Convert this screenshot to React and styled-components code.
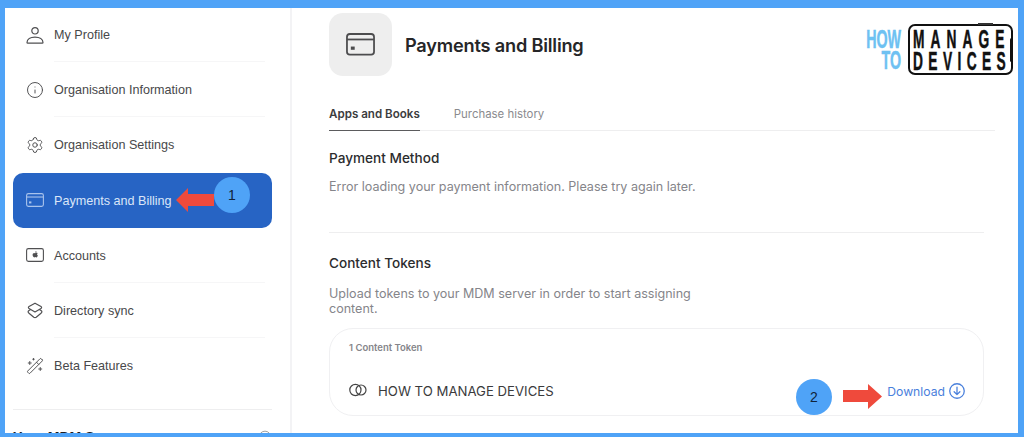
import styled, { createGlobalStyle } from "styled-components";
import { Info, Settings, WandSparkles } from "lucide-react";

const Global = createGlobalStyle`
  html, body {
    margin: 0;
    background: #fff;
  }
  * {
    box-sizing: border-box;
  }
`;

const Frame = styled.div`
  position: relative;
  width: 1024px;
  height: 437px;
  padding: 8px 6px 4px 5px;
  background: #4fa3f7;
  font-family: "Inter", "Liberation Sans", sans-serif;
  overflow: hidden;
`;

const Inner = styled.div`
  display: flex;
  height: 100%;
  background: #fff;
  overflow: hidden;
`;

const Sidebar = styled.aside`
  flex: 0 0 287px;
  padding: 0 18px 0 8px;
  margin-top: -1px;
  border-right: 2px solid #f3f3f5;
  font-family: "Liberation Sans", sans-serif;
`;

const NavRow = styled.div`
  display: flex;
  align-items: stretch;
  height: 55.2px;
  padding-left: 13px;
  border-radius: 10px;
  background: ${(p) => (p.$active ? "#2764c4" : "transparent")};
  color: ${(p) => (p.$active ? "#dbe6f8" : "#48484a")};
  font-size: 12.6px;
`;

const NavIcon = styled.span`
  flex: 0 0 28px;
  display: flex;
  align-items: center;
  color: ${(p) => (p.$active ? "#a9c3ec" : "#505052")};
`;

const NavLabel = styled.span`
  flex: 1;
  display: flex;
  align-items: center;
  margin-right: 7px;
  padding-top: 2px;
  border-bottom: 1px solid ${(p) => (p.$divider ? "#f6f6f7" : "transparent")};
`;

const SideRule = styled.div`
  height: 1px;
  margin-top: 16px;
  background: #eeeeef;
`;

const SideHeader = styled.div`
  display: flex;
  justify-content: space-between;
  align-items: center;
  padding-top: 19px;
  font-size: 14px;
  font-weight: 700;
  color: #1d1d1f;
`;

const Main = styled.main`
  flex: 1;
  padding: 5px 34px 0 37px;
  color: #1d1d1f;
`;

const Header = styled.header`
  display: flex;
  align-items: center;
  gap: 13px;
`;

const Tile = styled.div`
  width: 63px;
  height: 63px;
  display: flex;
  align-items: center;
  justify-content: center;
  border-radius: 14px;
  background: #eeeeee;
  color: #4c4c4e;
`;

const Title = styled.h1`
  margin: 0;
  font-size: 18.2px;
  font-weight: 600;
  letter-spacing: -0.2px;
  color: #262628;
`;

const Tabs = styled.nav`
  display: flex;
  gap: 34px;
  margin: 28px -11px 0 0;
  border-bottom: 1px solid #eeeeef;
`;

const Tab = styled.span`
  height: 27px;
  margin-bottom: -1px;
  padding-top: 3px;
  font-size: ${(p) => (p.$active ? "11.6px" : "11.4px")};
  font-weight: ${(p) => (p.$active ? 600 : 400)};
  color: ${(p) => (p.$active ? "#3c3c3e" : "#8a8a8e")};
  border-bottom: 1px solid ${(p) => (p.$active ? "#5b5b5d" : "transparent")};
`;

const SectionTitle = styled.h2`
  margin: 0;
  font-size: 13.6px;
  font-weight: 500;
  line-height: 16px;
  color: #2c2c2e;
`;

const Muted = styled.p`
  margin: 0;
  font-size: 12.55px;
  line-height: 15px;
  color: #85858a;
`;

const PaymentBlock = styled.section`
  display: flex;
  flex-direction: column;
  gap: 13px;
  height: 102px;
  padding-top: 19px;
  border-bottom: 1px solid #eeeeef;
`;

const TokensBlock = styled.section`
  padding-top: 22px;

  ${Muted} {
    width: 385px;
    margin-top: 15px;
  }
`;

const TokenCard = styled.div`
  height: 88px;
  margin-top: 12px;
  padding: 13px 18px 0 19px;
  border: 1px solid #f0f0f2;
  border-radius: 24px;
`;

const CardCount = styled.div`
  font-size: 9.5px;
  font-weight: 600;
  line-height: 12px;
  color: #85858a;
`;

const TokenRow = styled.div`
  display: flex;
  align-items: center;
  justify-content: space-between;
  margin-top: 29px;
`;

const TokenName = styled.div`
  display: flex;
  align-items: center;
  gap: 11px;
  font-size: 13.2px;
  color: #3a3a3c;

  svg {
    margin-top: -3px;
  }
`;

const DownloadLink = styled.a`
  display: flex;
  align-items: center;
  gap: 4px;
  font-size: 12.2px;
  color: #4a80dc;
`;

const Badge = styled.div`
  position: absolute;
  left: ${(p) => p.$x}px;
  top: ${(p) => p.$y}px;
  width: 36px;
  height: 36px;
  display: flex;
  align-items: center;
  justify-content: center;
  border-radius: 50%;
  background: #4fa3f7;
  font-family: "Liberation Sans", sans-serif;
  font-size: 14px;
  color: #10233a;
`;

const Arrow = styled.svg`
  position: absolute;
  left: ${(p) => p.$x}px;
  top: ${(p) => p.$y}px;
`;

const Logo = styled.div`
  position: absolute;
  left: 840px;
  top: 24px;
  display: flex;
  gap: 7px;
  font-family: "Liberation Sans", sans-serif;
  font-weight: 700;
`;

const LogoHow = styled.div`
  width: 61px;
  padding-top: 4.5px;
  text-align: right;
  font-size: 25px;
  line-height: 21px;
  color: #6ec1f2;
  -webkit-text-stroke: 0.5px #6ec1f2;
  transform: scaleX(0.57);
  transform-origin: right center;
`;

const LogoPhone = styled.div`
  position: relative;
  width: 105px;
  height: 51px;
  padding: 2px 0 0 3px;
  border: 2px solid #111;
  border-radius: 7px;
  font-size: 25px;
  line-height: 22px;
  color: #111;

  &::before {
    content: "";
    position: absolute;
    right: 18px;
    top: -3px;
    width: 15px;
    height: 2px;
    background: #333;
  }

  &::after {
    content: "";
    position: absolute;
    right: -2px;
    top: 12px;
    width: 3px;
    height: 24px;
    border-radius: 2px;
    background: #111;
  }
`;

const LogoLine = styled.div`
  letter-spacing: ${(p) => p.$spacing}px;
  white-space: nowrap;
  width: 180px;
  -webkit-text-stroke: 0.5px #111;
  transform: scaleX(0.55);
  transform-origin: left center;
`;

const CardIcon = ({ size = 18 }) => (
  <svg width={size} height={size * 0.78} viewBox="0 0 18 14" fill="none" stroke="currentColor" strokeWidth="1.1">
    <rect x="0.6" y="0.6" width="16.8" height="12.8" rx="1.8" />
    <path d="M0.6 4h16.8" />
    <rect x="3" y="8.4" width="2.4" height="2" fill="currentColor" stroke="none" />
  </svg>
);

const ProfileIcon = () => (
  <svg width="18" height="18" viewBox="0 0 18 18" fill="none" stroke="currentColor" strokeWidth="1.2">
    <circle cx="9" cy="4.8" r="3.2" />
    <path d="M1 16.6c0-3.4 3.4-5.4 8-5.4s8 2 8 5.4c0 .4-.3.6-.7.6H1.7c-.4 0-.7-.2-.7-.6z" />
  </svg>
);

const AppleIcon = () => (
  <svg width="18" height="14" viewBox="0 0 18 14" fill="none">
    <rect x="0.6" y="0.6" width="16.8" height="12.8" rx="1.8" stroke="currentColor" strokeWidth="1.1" />
    <path
      d="M9.3 4.9c.4 0 .9-.3 1.2-.3.4 0 .9.2 1.2.6-.9.6-.8 1.9.2 2.4-.3.8-.8 1.8-1.5 1.8-.4 0-.6-.3-1.100-.3s-.7.3-1.100.3C7.400 9.400 6.600 8 6.600 6.800c0-1.200.8-1.900 1.500-1.900.5 0 .8.300 1.200.300zM9.200 4.500c0-.7.500-1.300 1.200-1.400.1.700-.5 1.400-1.200 1.400z"
      fill="currentColor"
    />
  </svg>
);

const LayersIcon = () => (
  <svg width="18" height="18" viewBox="0 0 18 18" fill="none" stroke="currentColor" strokeWidth="1.2" strokeLinejoin="round">
    <path d="M9 1.200 15 4.600c.8.500.8 1.300 0 1.800L9 10 3 6.400c-.8-.5-.8-1.300 0-1.800z" />
    <path d="M4.600 7.400 3 8.400c-1.200.8-1.200 2 0 2.800l4.800 4c.8.500 1.600.500 2.400 0l4.800-4c1.200-.8 1.200-2 0-2.800l-1.600-1" />
  </svg>
);

const TokenIcon = () => (
  <svg width="18" height="14" viewBox="0 0 18 14" fill="none" stroke="#444" strokeWidth="1.2">
    <circle cx="6.400" cy="7" r="5.600" />
    <circle cx="12" cy="7" r="5" />
  </svg>
);

const DownloadIcon = () => (
  <svg width="16" height="16" viewBox="0 0 15 15" fill="none" stroke="currentColor" strokeWidth="1.2" strokeLinecap="round" strokeLinejoin="round">
    <circle cx="7.500" cy="7.500" r="6.800" />
    <path d="M7.500 3.800v7M4.800 8.200l2.700 2.700 2.700-2.700" />
  </svg>
);

const navItems = [
  { label: "My Profile", icon: <ProfileIcon />, divider: true },
  { label: "Organisation Information", icon: <Info size={18} strokeWidth={1.3} />, divider: true },
  { label: "Organisation Settings", icon: <Settings size={18} strokeWidth={1.3} /> },
  { label: "Payments and Billing", icon: <CardIcon />, active: true },
  { label: "Accounts", icon: <AppleIcon />, divider: true },
  { label: "Directory sync", icon: <LayersIcon />, divider: true },
  { label: "Beta Features", icon: <WandSparkles size={18} strokeWidth={1.3} /> },
];

export default function App() {
  return (
    <Frame>
      <Global />
      <Inner>
        <Sidebar>
          {navItems.map((item) => (
            <NavRow key={item.label} $active={item.active}>
              <NavIcon $active={item.active}>{item.icon}</NavIcon>
              <NavLabel $divider={item.divider}>{item.label}</NavLabel>
            </NavRow>
          ))}
          <SideRule />
          <SideHeader>
            Your MDM Servers
            <Info size={14} strokeWidth={1.2} color="#777" />
          </SideHeader>
        </Sidebar>

        <Main>
          <Header>
            <Tile>
              <CardIcon size={29} />
            </Tile>
            <Title>Payments and Billing</Title>
          </Header>

          <Tabs>
            <Tab $active>Apps and Books</Tab>
            <Tab>Purchase history</Tab>
          </Tabs>

          <PaymentBlock>
            <SectionTitle>Payment Method</SectionTitle>
            <Muted>Error loading your payment information. Please try again later.</Muted>
          </PaymentBlock>

          <TokensBlock>
            <SectionTitle>Content Tokens</SectionTitle>
            <Muted>Upload tokens to your MDM server in order to start assigning content.</Muted>
            <TokenCard>
              <CardCount>1 Content Token</CardCount>
              <TokenRow>
                <TokenName>
                  <TokenIcon />
                  HOW TO MANAGE DEVICES
                </TokenName>
                <DownloadLink>
                  Download
                  <DownloadIcon />
                </DownloadLink>
              </TokenRow>
            </TokenCard>
          </TokensBlock>
        </Main>
      </Inner>

      <Logo>
        <LogoHow>
          HOW
          <br />
          TO
        </LogoHow>
        <LogoPhone>
          <LogoLine $spacing={11}>MANAGE</LogoLine>
          <LogoLine $spacing={9.800}>DEVICES</LogoLine>
        </LogoPhone>
      </Logo>

      <Arrow $x={176} $y={188} width="38" height="24" viewBox="0 0 38 24">
        <polygon points="0,12 12,0 12,6 38,6 38,18 12,18 12,24" fill="#ef4a3c" />
      </Arrow>
      <Badge $x={214} $y={177}>1</Badge>

      <Badge $x={796} $y={379}>2</Badge>
      <Arrow $x={843} $y={384} width="39" height="25" viewBox="0 0 39 25">
        <polygon points="0,6 25,6 25,0 39,12.500 25,25 25,18 0,18" fill="#ef4a3c" />
      </Arrow>
    </Frame>
  );
}
